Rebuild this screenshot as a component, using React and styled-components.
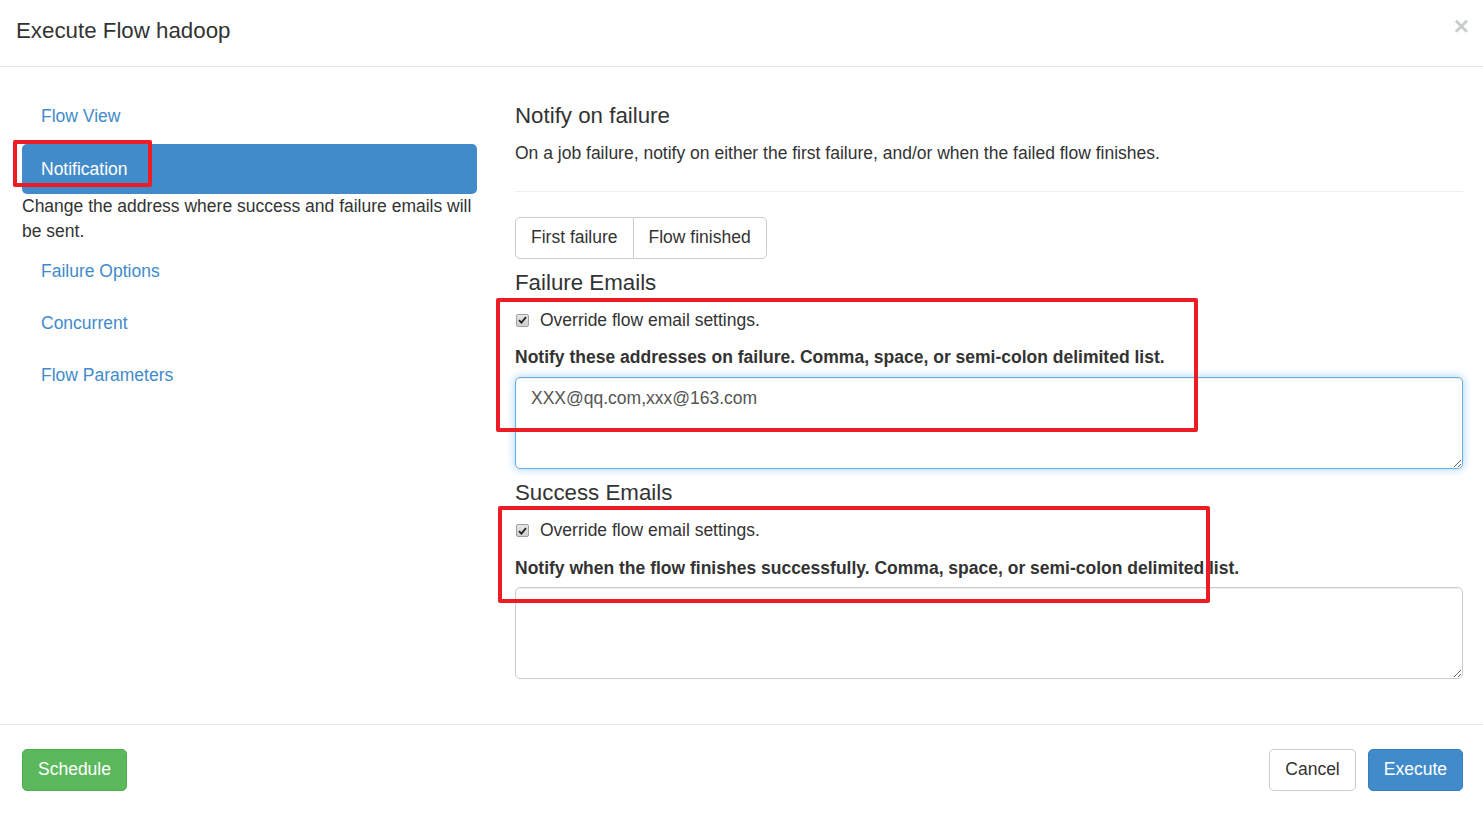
import React from 'react'
import styled, { createGlobalStyle } from 'styled-components'

const Global = createGlobalStyle`
  html, body {
    margin: 0;
    padding: 0;
    background: #fff;
  }
  body {
    font-family: "Liberation Sans", Arial, Helvetica, sans-serif;
    font-size: 17.5px;
    line-height: 1.42857;
    color: #333;
  }
  * { box-sizing: border-box; }
`

const Modal = styled.div`
  position: relative;
  width: 1483px;
  height: 814px;
  display: flex;
  flex-direction: column;
  background: #fff;
`

const Header = styled.div`
  height: 67px;
  padding: 0 20px 0 16px;
  display: flex;
  align-items: center;
  justify-content: space-between;
  border-bottom: 1px solid #e5e5e5;
`

const Title = styled.h4`
  margin: 0 0 4px;
  font-size: 22.3px;
  font-weight: 400;
  line-height: 1.3;
  color: #333;
`

const Close = styled.button`
  border: 0;
  background: transparent;
  padding: 0;
  margin: 0 -6px 14px 0;
  font-family: "Liberation Sans", Arial, sans-serif;
  font-size: 26px;
  font-weight: 700;
  line-height: 1;
  color: #000;
  opacity: 0.2;
  cursor: pointer;
`

const Body = styled.div`
  flex: 1;
  display: grid;
  grid-template-columns: 455px 1fr;
  column-gap: 38px;
  padding: 25px 20px 0 22px;
`

const Pills = styled.ul`
  list-style: none;
  margin: 0;
  padding: 0;
  display: flex;
  flex-direction: column;
  gap: 2.5px;
`

const Pill = styled.a`
  display: block;
  padding: 12.4px 19px;
  border-radius: 5px;
  text-decoration: none;
  color: ${p => (p.$active ? '#fff' : '#428bca')};
  background: ${p => (p.$active ? '#428bca' : 'transparent')};
`

const PillNote = styled.div`
  color: #333;
`

const Content = styled.div`
  display: flex;
  flex-direction: column;
`

const Heading = styled.h4`
  margin: 12.4px 0;
  font-size: 22.3px;
  font-weight: 400;
  line-height: 1.1;
  color: #333;
`

const Lead = styled.p`
  margin: 0;
`

const Rule = styled.hr`
  width: 100%;
  margin: 24.8px 0;
  border: 0;
  border-top: 1px solid #eee;
`

const BtnGroup = styled.div`
  display: flex;
  align-self: flex-start;
`

const Btn = styled.button`
  font-family: inherit;
  font-size: 17.5px;
  line-height: 1.42857;
  padding: 7px 15px 7.8px;
  border-radius: 5px;
  border: 1px solid ${p => p.$border || '#ccc'};
  background: ${p => p.$bg || '#fff'};
  color: ${p => p.$color || '#333'};
  cursor: pointer;
`

const GroupBtn = styled(Btn)`
  border-radius: 0;
  &:first-child {
    border-radius: 5px 0 0 5px;
  }
  &:last-child {
    border-radius: 0 5px 5px 0;
    margin-left: -1px;
  }
`

const CheckRow = styled.label`
  display: flex;
  align-items: center;
  gap: 11px;
  margin: 0 0 12.4px 1px;
`

const Box = styled.span`
  width: 13px;
  height: 13px;
  border: 1px solid #a0a0a0;
  border-radius: 2px;
  background: linear-gradient(#e6e6e6, #cfcfcf);
  display: inline-flex;
  align-items: center;
  justify-content: center;
`

const FieldLabel = styled.label`
  display: block;
  font-weight: 700;
  margin-bottom: 6.6px;
`

const Area = styled.textarea`
  display: block;
  width: 100%;
  height: 92px;
  padding: 8px 15px;
  font-family: inherit;
  font-size: 17.5px;
  line-height: 1.42857;
  color: #555;
  border-radius: 5px;
  border: 1px solid ${p => (p.$focus ? '#66afe9' : '#ccc')};
  box-shadow: ${p =>
    p.$focus
      ? 'inset 0 1px 1px rgba(0,0,0,.075), 0 0 8px rgba(102,175,233,.6)'
      : 'inset 0 1px 1px rgba(0,0,0,.075)'};
  outline: none;
  resize: vertical;
`

const Footer = styled.div`
  display: flex;
  justify-content: space-between;
  align-items: center;
  padding: 24px 20px 23px 22px;
  border-top: 1px solid #e5e5e5;
`

const Actions = styled.div`
  display: flex;
  gap: 12px;
`

const Mark = styled.div`
  position: absolute;
  border: 4px solid #ed1c24;
  border-radius: 2px;
  pointer-events: none;
`

function Check() {
  return (
    <Box>
      <svg width="9" height="8" viewBox="0 0 9 8">
        <path d="M1 4.2 L3.4 6.6 L8 1.2" fill="none" stroke="#222" strokeWidth="1.8" />
      </svg>
    </Box>
  )
}

export default function App() {
  return (
    <Modal>
      <Global />
      <Header>
        <Title>Execute Flow hadoop</Title>
        <Close>×</Close>
      </Header>
      <Body>
        <Pills>
          <li><Pill href="#">Flow View</Pill></li>
          <li>
            <Pill href="#" $active>Notification</Pill>
            <PillNote>Change the address where success and failure emails will be sent.</PillNote>
          </li>
          <li><Pill href="#">Failure Options</Pill></li>
          <li><Pill href="#">Concurrent</Pill></li>
          <li><Pill href="#">Flow Parameters</Pill></li>
        </Pills>
        <Content>
          <Heading>Notify on failure</Heading>
          <Lead>On a job failure, notify on either the first failure, and/or when the failed flow finishes.</Lead>
          <Rule />
          <BtnGroup>
            <GroupBtn>First failure</GroupBtn>
            <GroupBtn>Flow finished</GroupBtn>
          </BtnGroup>
          <Heading>Failure Emails</Heading>
          <CheckRow><Check />Override flow email settings.</CheckRow>
          <FieldLabel>Notify these addresses on failure. Comma, space, or semi-colon delimited list.</FieldLabel>
          <Area $focus defaultValue="XXX@qq.com,xxx@163.com" />
          <Heading>Success Emails</Heading>
          <CheckRow><Check />Override flow email settings.</CheckRow>
          <FieldLabel>Notify when the flow finishes successfully. Comma, space, or semi-colon delimited list.</FieldLabel>
          <Area defaultValue="" />
        </Content>
      </Body>
      <Footer>
        <Btn $bg="#5cb85c" $border="#4cae4c" $color="#fff">Schedule</Btn>
        <Actions>
          <Btn>Cancel</Btn>
          <Btn $bg="#428bca" $border="#357ebd" $color="#fff">Execute</Btn>
        </Actions>
      </Footer>
      <Mark style={{ left: 13, top: 140, width: 139, height: 47 }} />
      <Mark style={{ left: 496, top: 298, width: 702, height: 134 }} />
      <Mark style={{ left: 498, top: 506, width: 712, height: 97 }} />
    </Modal>
  )
}
